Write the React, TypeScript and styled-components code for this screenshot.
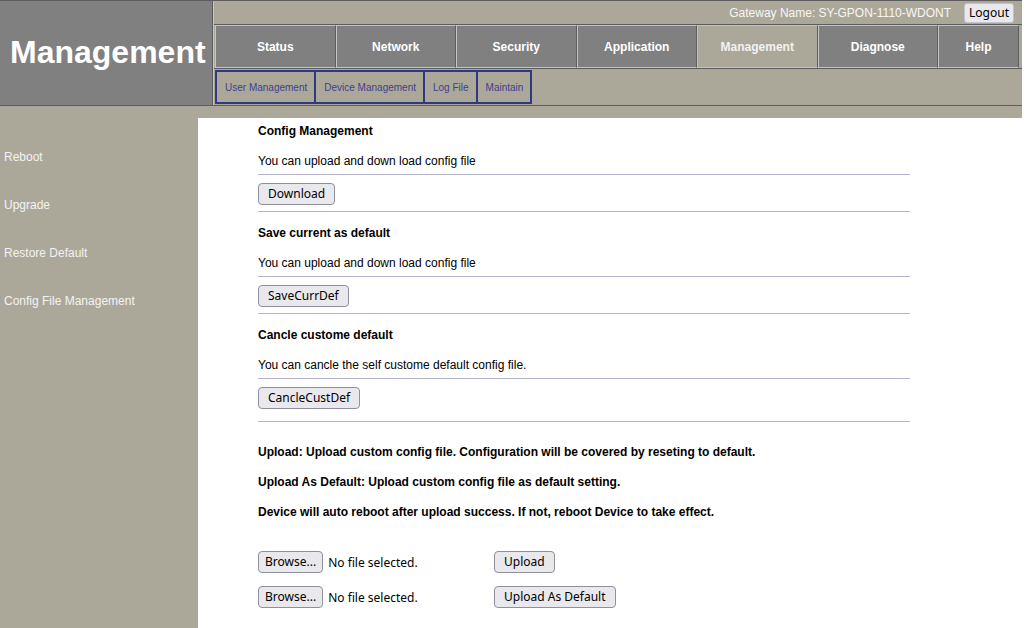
import React from "react";
import styled, { createGlobalStyle } from "styled-components";

const beige = "#aca899";
const grey = "#808080";
const dark = "#5c5c5c";

const GlobalStyle = createGlobalStyle`
  html, body {
    margin: 0;
    padding: 0;
    background: #ffffff;
    font-family: "Liberation Sans", Arial, sans-serif;
  }
`;

const Page = styled.div`
  display: flex;
  flex-direction: column;
  min-height: 628px;
`;

const Header = styled.header`
  display: flex;
  width: 1022px;
  box-sizing: border-box;
  border-top: 1px solid ${dark};
  border-bottom: 1px solid ${dark};
  background: ${beige};
`;

const Logo = styled.div`
  flex: none;
  width: 213px;
  box-sizing: border-box;
  padding: 0 0 2px 10px;
  display: flex;
  align-items: center;
  background: ${grey};
  border-right: 1px solid ${dark};
  color: #ffffff;
  font-size: 32px;
  font-weight: bold;
`;

const HeaderRight = styled.div`
  flex: 1;
  min-width: 0;
  display: flex;
  flex-direction: column;
  border-left: 1px solid #c9c7bb;
`;

const TopBar = styled.div`
  height: 23px;
  display: flex;
  align-items: center;
  justify-content: flex-end;
  gap: 13px;
  padding-right: 8px;
  color: #f6f6f6;
  font-size: 12px;
`;

const NavRow = styled.nav`
  display: flex;
  padding: 0 3px 0 1px;
  border-top: 1px solid ${dark};
  border-bottom: 1px solid ${dark};
`;

const NavItem = styled.div<{ $active?: boolean; $grow?: boolean }>`
  width: ${({ $grow }) => ($grow ? "auto" : "120.5px")};
  flex: ${({ $grow }) => ($grow ? 1 : "none")};
  height: 43px;
  box-sizing: border-box;
  display: flex;
  align-items: center;
  justify-content: center;
  background: ${({ $active }) => ($active ? beige : grey)};
  border: 1px solid #c4c4c4;
  border-right-color: #5e5e5e;
  color: ${({ $active }) => ($active ? "#f2f2f2" : "#ffffff")};
  font-size: 12px;
  font-weight: bold;
`;

const SubNav = styled.div`
  height: 36px;
  display: flex;
  padding: 1px 0 0 1px;
  box-sizing: border-box;
`;

const SubItem = styled.div<{ $first?: boolean }>`
  height: 34px;
  box-sizing: border-box;
  display: flex;
  align-items: center;
  padding: 0 7px 0 8px;
  border: 2px solid #2f3883;
  border-left-width: ${({ $first }) => ($first ? "2px" : "0")};
  color: #3d3f8e;
  font-size: 10px;
`;

const Strip = styled.div`
  width: 1022px;
  height: 12px;
  background: ${beige};
`;

const Body = styled.div`
  flex: 1;
  display: flex;
`;

const Sidebar = styled.aside`
  width: 198px;
  flex: none;
  background: ${beige};
  padding-top: 27px;
  display: flex;
  flex-direction: column;
  gap: 24px;
`;

const SideLink = styled.div`
  height: 24px;
  line-height: 24px;
  padding-left: 4px;
  color: #f3f3f3;
  font-size: 12px;
`;

const Main = styled.main`
  flex: 1;
  background: #ffffff;
  padding-left: 60px;
  padding-bottom: 20px;
`;

const Column = styled.div`
  width: 652px;
`;

const Section = styled.section`
  padding-top: 8px;
  border-bottom: 1px solid #b4b4cb;

  &:first-child {
    padding-top: 0;
  }
`;

const Title = styled.div`
  height: 26px;
  line-height: 26px;
  font-size: 12px;
  font-weight: bold;
  color: #000000;
`;

const Desc = styled.div`
  height: 30px;
  line-height: 34px;
  font-size: 12px;
  color: #000000;
  border-bottom: 1px solid #b4b4cb;
`;

const ButtonRow = styled.div<{ $last?: boolean }>`
  padding: 8px 0 ${({ $last }) => ($last ? "12px" : "6px")};
`;

const Button = styled.button`
  height: 22px;
  box-sizing: border-box;
  padding: 0 9px;
  background: #e9e9ed;
  border: 1px solid #8f8f9d;
  border-radius: 4px;
  color: #000000;
  font-family: "Noto Sans", "Open Sans", sans-serif;
  font-size: 12px;
  line-height: 20px;
  cursor: pointer;
`;

const BrowseButton = styled(Button)`
  padding: 0 6px;
`;

const LogoutButton = styled(Button)`
  height: 20px;
  padding: 0 4px;
  border-color: #c2c2c8;
  border-radius: 3px;
  font-size: 12px;
  line-height: 18px;
`;

const Notes = styled.div`
  padding-top: 15px;
`;

const Note = styled.div`
  height: 30px;
  line-height: 30px;
  font-size: 12px;
  font-weight: bold;
  color: #000000;
`;

const UploadForm = styled.div`
  padding-top: 24px;
  display: flex;
  flex-direction: column;
  gap: 13px;
`;

const UploadRow = styled.div`
  display: grid;
  grid-template-columns: 236px auto;
  align-items: center;
`;

const FilePicker = styled.div`
  display: flex;
  align-items: center;
  gap: 5px;
`;

const FileLabel = styled.span`
  font-family: "Noto Sans", "Open Sans", sans-serif;
  font-size: 12px;
  color: #000000;
`;

const navItems = ["Status", "Network", "Security", "Application", "Management", "Diagnose", "Help"];
const subItems = ["User Management", "Device Management", "Log File", "Maintain"];
const sideLinks = ["Reboot", "Upgrade", "Restore Default", "Config File Management"];

const sections = [
  { title: "Config Management", desc: "You can upload and down load config file", button: "Download" },
  { title: "Save current as default", desc: "You can upload and down load config file", button: "SaveCurrDef" },
  { title: "Cancle custome default", desc: "You can cancle the self custome default config file.", button: "CancleCustDef" },
];

const notes = [
  "Upload: Upload custom config file. Configuration will be covered by reseting to default.",
  "Upload As Default: Upload custom config file as default setting.",
  "Device will auto reboot after upload success. If not, reboot Device to take effect.",
];

export default function App() {
  return (
    <Page>
      <GlobalStyle />
      <Header>
        <Logo>Management</Logo>
        <HeaderRight>
          <TopBar>
            <span>Gateway Name: SY-GPON-1110-WDONT</span>
            <LogoutButton>Logout</LogoutButton>
          </TopBar>
          <NavRow>
            {navItems.map((item, i) => (
              <NavItem key={item} $active={item === "Management"} $grow={i === navItems.length - 1}>
                {item}
              </NavItem>
            ))}
          </NavRow>
          <SubNav>
            {subItems.map((item, i) => (
              <SubItem key={item} $first={i === 0}>
                {item}
              </SubItem>
            ))}
          </SubNav>
        </HeaderRight>
      </Header>
      <Strip />
      <Body>
        <Sidebar>
          {sideLinks.map((link) => (
            <SideLink key={link}>{link}</SideLink>
          ))}
        </Sidebar>
        <Main>
          <Column>
            {sections.map((s, i) => (
              <Section key={s.title}>
                <Title>{s.title}</Title>
                <Desc>{s.desc}</Desc>
                <ButtonRow $last={i === sections.length - 1}>
                  <Button>{s.button}</Button>
                </ButtonRow>
              </Section>
            ))}
            <Notes>
              {notes.map((n) => (
                <Note key={n}>{n}</Note>
              ))}
            </Notes>
            <UploadForm>
              <UploadRow>
                <FilePicker>
                  <BrowseButton>Browse...</BrowseButton>
                  <FileLabel>No file selected.</FileLabel>
                </FilePicker>
                <div>
                  <Button>Upload</Button>
                </div>
              </UploadRow>
              <UploadRow>
                <FilePicker>
                  <BrowseButton>Browse...</BrowseButton>
                  <FileLabel>No file selected.</FileLabel>
                </FilePicker>
                <div>
                  <Button>Upload As Default</Button>
                </div>
              </UploadRow>
            </UploadForm>
          </Column>
        </Main>
      </Body>
    </Page>
  );
}
